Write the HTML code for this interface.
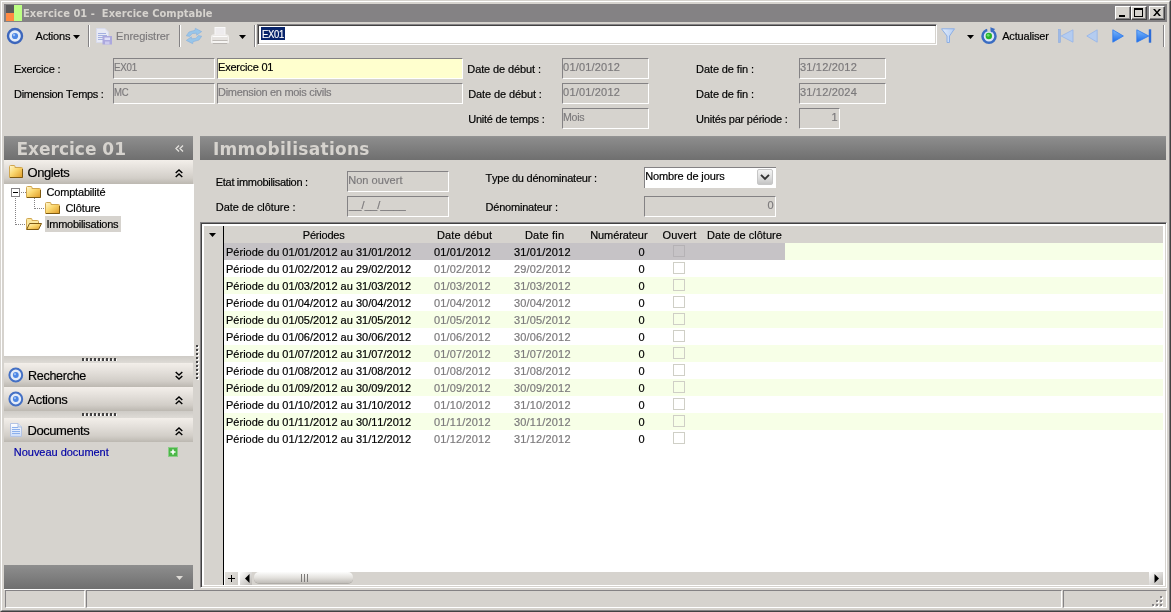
<!DOCTYPE html>
<html lang="fr"><head><meta charset="utf-8"><title>Exercice 01 - Exercice Comptable</title>
<style>
*{box-sizing:border-box;margin:0;padding:0}
html,body{width:1171px;height:612px;overflow:hidden;background:#D6D3CE}
body{font-kerning:none;position:relative;font-family:"Liberation Sans",sans-serif;font-size:11px;color:#000;line-height:13px}
#win{-webkit-text-stroke:.18px;position:absolute;left:0;top:0;width:1171px;height:612px;will-change:transform}
.a{position:absolute}
i{font-style:normal;display:block}
svg{display:block;overflow:visible}
#frame{left:0;top:0;width:1171px;height:612px;border:1px solid;border-color:#D6D3CE #424142 #424142 #D6D3CE}
#frame2{left:1px;top:1px;width:1169px;height:610px;border:1px solid;border-color:#fff #848284 #848284 #fff}
#title{left:4px;top:4px;width:1163px;height:18px;background:#848284}
.wb{position:absolute;top:2px;width:16px;height:14px;background:#D6D3CE;border:1px solid;border-color:#fff #424142 #424142 #fff;box-shadow:inset -1px -1px 0 #848284}
.t{position:absolute;white-space:pre;line-height:13px;height:13px}
.g{color:#7B797B}
.sep{position:absolute;top:25px;width:2px;height:22px;border-left:1px solid #848284;border-right:1px solid #fff}
.f{position:absolute;height:21px;border:1px solid;border-color:#848284 #fff #fff #848284;color:#7B797B;padding:2px 0 0 1px;white-space:pre;overflow:hidden}
.ph{position:absolute;height:24px;top:136px;background:linear-gradient(#959595 0,#8C8C8C 2px,#6F6F6F 100%)}
.bar{position:absolute;left:4px;width:189px;background:linear-gradient(#F3EFEA 0,#E4E0DB 35%,#D2CEC8 75%,#BCB8B1 100%)}
.r{position:absolute;left:224px;width:939px;height:17px;white-space:pre}
.r.alt{background:#F7FFE7}
.r.sel{background:linear-gradient(90deg,#C6C3C6 0,#C6C3C6 561px,#F7FFE7 561px)}
.r span{position:absolute;top:3px;line-height:13px}
.c1{left:2px}
.c2{left:210px;color:#7B797B}
.c3{left:290px;color:#7B797B}
.sel .c2,.sel .c3{color:#000}
.c4{left:414.5px}
.cb{position:absolute;left:449px;top:2px;width:12px;height:12px;border:1px solid #CFCFC6;background:#fff}
.alt .cb{background:#F7FFE7}
.sel .cb{background:#C6C3C6;border-color:#B5B2B5}
.dots{position:absolute;width:36px;height:3px;background:repeating-linear-gradient(90deg,#424142 0,#424142 2px,transparent 2px,transparent 4px)}
.dots:after{content:"";position:absolute;left:1px;top:1px;width:36px;height:2px;background:repeating-linear-gradient(90deg,transparent 0,transparent 1px,#fff 1px,#fff 2px,transparent 2px,transparent 4px)}

.c1{letter-spacing:0.01px}
.c2,.c3{letter-spacing:0.16px}

</style></head><body>
<div id="win">
<div class="a" id="frame"></div><div class="a" id="frame2"></div>
<div class="a" id="title">
 <i class="a" style="left:2px;top:1px;width:8px;height:8px;background:#5A595A"></i>
 <i class="a" style="left:2px;top:9px;width:8px;height:8px;background:#FF8A42"></i>
 <i class="a" style="left:10px;top:1px;width:8px;height:16px;background:#BDFF84"></i>
 <i class="wb" style="left:1111px"><i class="a" style="left:3px;top:8px;width:6px;height:2px;background:#000"></i></i>
 <i class="wb" style="left:1127px"><i class="a" style="left:2px;top:1px;width:9px;height:9px;border:1px solid #000;border-top-width:2px"></i></i>
 <i class="wb" style="left:1145px"><svg class="a" style="left:3px;top:2px" width="8" height="7" viewBox="0 0 8 7"><path d="M0 0H2L4 2.5L6 0H8L5 3.5L8 7H6L4 4.5L2 7H0L3 3.5Z" fill="#000"/></svg></i>
</div>
<span class="t" style="left:23px;top:7px;letter-spacing:0.04px;color:#D6D3CE;font-weight:bold;font-family:'DejaVu Sans Condensed','Liberation Sans',sans-serif;-webkit-text-stroke:0">Exercice 01 -  Exercice Comptable</span>
<!-- toolbar -->
<svg class="a" style="left:6px;top:27px" width="18" height="18" viewBox="0 0 18 18"><circle cx="9" cy="9" r="7" fill="#E4ECF8" stroke="#3C66BC" stroke-width="2.4"/><circle cx="9" cy="9" r="3.1" fill="#4C86E4"/><circle cx="8" cy="8" r="1.2" fill="#9CC0F4"/></svg>
<span class="t" style="left:35.5px;top:30px;letter-spacing:-0.18px">Actions</span>
<svg class="a" style="left:73px;top:35px" width="7" height="4"><path d="M0 0H7L3.5 4Z" fill="#000"/></svg>
<i class="sep" style="left:88px"></i>
<svg class="a" style="left:96px;top:28px" width="16" height="17" viewBox="0 0 16 17"><path d="M.5 .5H9L12.500 4V14.500H.5Z" fill="#E8EAF5" stroke="#D8DBEC"/><path d="M2 5.500H10M2 7.500H11M2 9.500H8M2 11.500H7" stroke="#A4B0E0" stroke-width="1"/><rect x="6.500" y="8" width="9.500" height="8.500" fill="#ACA8DE"/><rect x="8.500" y="9.500" width="5.500" height="2.500" fill="#E0E0F8"/><rect x="9" y="13.500" width="4.500" height="3" fill="#CCCAEE"/></svg>
<span class="t" style="left:116.1px;top:30px;letter-spacing:-0.04px;color:#7B797B">Enregistrer</span>
<i class="sep" style="left:179px"></i>
<svg class="a" style="left:186px;top:28px" width="16" height="16" viewBox="0 0 16 16"><path d="M.3 7.800L3 4L9 2.300L9.300 .3L15.700 3.600L10.600 7.200L10.700 5.200L6.200 5.600L3.600 8.400Z" fill="#98C6EA" stroke="#86AEDC" stroke-width=".6"/><path d="M.3 7.800L3 4L9 2.300L9.300 .3L15.700 3.600L10.600 7.200L10.700 5.200L6.200 5.600L3.600 8.400Z" fill="#98C6EA" stroke="#86AEDC" stroke-width=".6" transform="rotate(180 8 8)"/></svg>
<svg class="a" style="left:211px;top:27px" width="18" height="17" viewBox="0 0 18 17"><rect x="4" y=".5" width="10" height="8" fill="#EEECEE" stroke="#F8F8F8"/><rect x=".5" y="8" width="17" height="8.500" rx="1.500" fill="#E6E3E0" stroke="#F2F0EE"/><path d="M1.500 9.500H16.500" stroke="#FCFCFC"/><path d="M1.500 13.500H16.500" stroke="#BEBAB6"/><rect x="1.500" y="14" width="15" height="2" fill="#F6F5F3"/><path d="M1.500 16.500H16.500" stroke="#B8B4B0"/></svg>
<svg class="a" style="left:239px;top:35px" width="7" height="4"><path d="M0 0H7L3.5 4Z" fill="#000"/></svg>
<i class="sep" style="left:254px"></i>
<div class="a" id="search" style="left:257px;top:24px;width:680px;height:21px;background:#fff;border:1px solid;border-color:#848284 #fff #fff #848284;box-shadow:inset 1px 1px 0 #424142,inset -1px -1px 0 #D6D3CE"><i class="a" style="left:3px;top:2px;width:24px;height:13px;background:#08246B"></i></div>
<span class="t" style="left:261.5px;top:28px;letter-spacing:-0.3px;color:#fff;transform:scaleX(0.86);transform-origin:0 0">EX01</span>
<svg class="a" style="left:941px;top:28px" width="14" height="15" viewBox="0 0 14 15"><defs><linearGradient id="fu" x1="0" y1="0" x2="1" y2="0"><stop offset="0" stop-color="#E4EEFC"/><stop offset="1" stop-color="#B4CCF2"/></linearGradient></defs><path d="M.5 .8H13.500L8.500 8V14.500H6V8Z" fill="url(#fu)" stroke="#8CAEE4" stroke-width="1" stroke-linejoin="round"/></svg>
<svg class="a" style="left:967px;top:35px" width="7" height="4"><path d="M0 0H7L3.5 4Z" fill="#000"/></svg>
<svg class="a" style="left:980px;top:27px" width="18" height="18" viewBox="0 0 18 18"><circle cx="9" cy="9.300" r="6.500" fill="#DCE6F6" stroke="#3A6CC2" stroke-width="2.500"/><path d="M6.800 0L11 0L10.500 4.500L7.500 4.500Z" fill="#D6D3CE"/><path d="M10.300 .3L15.200 2L11.200 5.400Z" fill="#3A6CC2"/><circle cx="8.800" cy="9" r="3.200" fill="#28B428"/><circle cx="8.200" cy="8.300" r="1.400" fill="#6CDC6C"/></svg>
<span class="t" style="left:1002.2px;top:30px;letter-spacing:-0.17px">Actualiser</span>
<svg class="a" style="left:1058px;top:29px" width="16" height="14" viewBox="0 0 16 14"><rect x=".5" y=".5" width="2" height="13" fill="#9DB9E8" stroke="#8CACE0" stroke-width=".6"/><path d="M15 .8V13.200L3.200 7Z" fill="#B4CCF0" stroke="#94B4E8" stroke-width=".8"/></svg>
<svg class="a" style="left:1086px;top:29px" width="12" height="14" viewBox="0 0 12 14"><path d="M11.200 .8V13.200L.8 7Z" fill="#B4CCF0" stroke="#94B4E8" stroke-width=".8"/></svg>
<svg class="a" style="left:1112px;top:29px" width="13" height="14" viewBox="0 0 13 14"><defs><linearGradient id="pb" x1="0" y1="0" x2="0" y2="1"><stop offset="0" stop-color="#7CB8FC"/><stop offset="1" stop-color="#1C6CE8"/></linearGradient></defs><path d="M.8 .8V13.200L11.400 7Z" fill="url(#pb)" stroke="#2C78EC" stroke-width=".8"/></svg>
<svg class="a" style="left:1136px;top:29px" width="16" height="14" viewBox="0 0 16 14"><path d="M.8 .8V13.200L12.800 7Z" fill="url(#pb)" stroke="#2C78EC" stroke-width=".8"/><rect x="12.800" y=".3" width="2.400" height="13.400" fill="#2C6CD8"/></svg>
<i class="sep" style="left:1163px"></i>
<!-- form -->
<span class="t" style="left:14px;top:63px;letter-spacing:-0.2px">Exercice :</span>
<span class="t" style="left:14px;top:88px;letter-spacing:-0.31px">Dimension Temps :</span>
<div class="f" style="left:113px;top:58px;width:102px"></div>
<div class="f" style="left:217px;top:58px;width:246px;background:#FFFFCE"></div>
<div class="f" style="left:113px;top:83px;width:102px"></div>
<div class="f" style="left:217px;top:83px;width:246px"></div>
<span class="t" style="left:114.3px;top:61px;letter-spacing:-0.3px;color:#7B797B;transform:scaleX(0.888);transform-origin:0 0">EX01</span>
<span class="t" style="left:218px;top:61px;letter-spacing:-0.2px">Exercice 01</span>
<span class="t" style="left:114.3px;top:86px;letter-spacing:-0.3px;color:#7B797B;transform:scaleX(0.867);transform-origin:0 0">MC</span>
<span class="t" style="left:218px;top:86px;letter-spacing:-0.3px;color:#7B797B">Dimension en mois civils</span>
<span class="t" style="left:467.3px;top:63px;letter-spacing:-0.11px">Date de début :</span>
<span class="t" style="left:468.2px;top:88px;letter-spacing:-0.11px">Date de début :</span>
<span class="t" style="left:468.2px;top:113px;letter-spacing:-0.24px">Unité de temps :</span>
<div class="f" style="left:562px;top:58px;width:87px"></div>
<div class="f" style="left:562px;top:83px;width:87px"></div>
<div class="f" style="left:562px;top:108px;width:87px"></div>
<span class="t" style="left:563.1px;top:61px;letter-spacing:0.19px;color:#7B797B">01/01/2012</span>
<span class="t" style="left:563.1px;top:86px;letter-spacing:0.19px;color:#7B797B">01/01/2012</span>
<span class="t" style="left:563.1px;top:111px;letter-spacing:-0.3px;color:#7B797B;transform:scaleX(0.966);transform-origin:0 0">Mois</span>
<span class="t" style="left:696.1px;top:63px;letter-spacing:-0.11px">Date de fin :</span>
<span class="t" style="left:696.1px;top:88px;letter-spacing:-0.11px">Date de fin :</span>
<span class="t" style="left:696.1px;top:113px;letter-spacing:-0.22px">Unités par période :</span>
<div class="f" style="left:799px;top:58px;width:87px"></div>
<div class="f" style="left:799px;top:83px;width:87px"></div>
<div class="f" style="left:799px;top:108px;width:41px"></div>
<span class="t" style="left:800px;top:61px;letter-spacing:0.19px;color:#7B797B">31/12/2012</span>
<span class="t" style="left:800px;top:86px;letter-spacing:0.19px;color:#7B797B">31/12/2024</span>
<span class="t" style="left:831.5px;top:111px;color:#7B797B">1</span>
<!-- panel headers -->
<div class="ph" style="left:4px;width:189px"></div>
<div class="ph" style="left:200px;width:966px"></div>
<span class="t" style="left:16.5px;top:140px;letter-spacing:-0.01px;font-size:17px;line-height:19px;height:19px;color:#D6D3CE;font-weight:bold;font-family:'DejaVu Sans','Liberation Sans',sans-serif;-webkit-text-stroke:0">Exercice 01</span>
<span class="t" style="left:213px;top:140px;letter-spacing:0.28px;font-size:17px;line-height:19px;height:19px;color:#D6D3CE;font-weight:bold;font-family:'DejaVu Sans','Liberation Sans',sans-serif;-webkit-text-stroke:0">Immobilisations</span>
<svg class="a" style="left:175px;top:145px" width="9" height="7" viewBox="0 0 9 7"><path d="M4 .5L1 3.500L4 6.500M8 .5L5 3.500L8 6.500" fill="none" stroke="#E4E2DE" stroke-width="1.300"/></svg>
<!-- left panel -->
<div class="bar" style="top:160px;height:24px"></div>
<svg class="a" style="left:9px;top:165px" width="14" height="13" viewBox="0 0 14 13"><defs><linearGradient id="fg" x1="0" y1="0" x2="1" y2="1"><stop offset="0" stop-color="#FFF8D2"/><stop offset=".45" stop-color="#FBD870"/><stop offset="1" stop-color="#DE9A26"/></linearGradient></defs><path d="M.5 12.500V1.500Q.5 .5 1.500 .5H5Q6 .5 6 1.500V2.500H12.500Q13.500 2.500 13.500 3.500V12.500Z" fill="url(#fg)" stroke="#D0A650"/><path d="M13.500 4V12.500H1" fill="none" stroke="#7E5A12"/></svg>
<span class="t" style="left:27.5px;top:165px;letter-spacing:-0.43px;font-size:13px;line-height:15px;height:15px">Onglets</span>
<svg class="a chev" style="left:175px;top:169px" width="8" height="9" viewBox="0 0 8 9"><path d="M.7 4L4 .9L7.300 4M.7 8L4 4.900L7.300 8" fill="none" stroke="#000" stroke-width="1.400"/></svg>
<div class="a" style="left:4px;top:184px;width:190px;height:172px;background:#fff"></div>
<!-- tree -->
<svg class="a" style="left:11px;top:186px" width="36" height="40" viewBox="0 0 36 40" shape-rendering="crispEdges"><path d="M9.500 6.500H15M4.500 12V38.500M4.500 38.500H15M23.500 12V22.500M23.500 22.500H34" fill="none" stroke="#848284" stroke-dasharray="1 1"/><rect x=".5" y="2.500" width="8" height="8" fill="#fff" stroke="#848284"/><path d="M2 6.500H7" stroke="#000"/></svg>
<svg class="a" style="left:26px;top:186px" width="15" height="12" viewBox="0 0 15 12"><path d="M.5 11.500V1.500Q.5 .5 1.500 .5H5Q6 .5 6 1.500V2.500H13.500Q14.500 2.500 14.500 3.500V11.500Z" fill="url(#fg)" stroke="#D0A650"/><path d="M14.500 4V11.500H1" fill="none" stroke="#7E5A12"/></svg>
<svg class="a" style="left:45px;top:202px" width="15" height="12" viewBox="0 0 15 12"><path d="M.5 11.500V1.500Q.5 .5 1.500 .5H5Q6 .5 6 1.500V2.500H13.500Q14.500 2.500 14.500 3.500V11.500Z" fill="url(#fg)" stroke="#D0A650"/><path d="M14.500 4V11.500H1" fill="none" stroke="#7E5A12"/></svg>
<svg class="a" style="left:26px;top:218px" width="16" height="12" viewBox="0 0 16 12"><path d="M.5 11.500V1.500Q.5 .5 1.500 .5H5Q6 .5 6 1.500V2.500H11.500Q12.500 2.500 12.500 3.500V5" fill="#FBE8A0" stroke="#D0A650"/><path d="M.7 11.500L3.500 5.500H15.500L12.500 11.500Z" fill="url(#fg)" stroke="#7E5A12"/></svg>
<span class="t" style="left:46.5px;top:186px;letter-spacing:-0.19px">Comptabilité</span>
<span class="t" style="left:65.5px;top:202px;letter-spacing:-0.08px">Clôture</span>
<i class="a" style="left:45px;top:216px;width:76px;height:16px;background:#D6D3CE"></i>
<span class="t" style="left:46.5px;top:218px;letter-spacing:-0.27px">Immobilisations</span>
<i class="a" style="left:4px;top:356px;width:189px;height:7px;background:linear-gradient(#CECBC6,#DEDBD6)"></i>
<i class="dots" style="left:82px;top:358px"></i>
<div class="bar" style="top:363px;height:24px"></div>
<svg class="a" style="left:8px;top:367px" width="16" height="16" viewBox="0 0 16 16"><circle cx="7.800" cy="8" r="6.400" fill="#E4ECF8" stroke="#4470C4" stroke-width="2"/><circle cx="7.800" cy="8" r="2.900" fill="#4C86E4"/><circle cx="7" cy="7.200" r="1.100" fill="#9CC0F4"/></svg>
<span class="t" style="left:27.5px;top:368px;letter-spacing:-0.3px;font-size:13px;line-height:15px;height:15px;transform:scaleX(0.964);transform-origin:0 0">Recherche</span>
<svg class="a" style="left:175px;top:371px" width="8" height="9" viewBox="0 0 8 9"><path d="M.7 1L4 4.100L7.300 1M.7 5L4 8.100L7.300 5" fill="none" stroke="#000" stroke-width="1.400"/></svg>
<div class="bar" style="top:387px;height:24px"></div>
<svg class="a" style="left:8px;top:391px" width="16" height="16" viewBox="0 0 16 16"><circle cx="7.800" cy="8" r="6.400" fill="#E4ECF8" stroke="#4470C4" stroke-width="2"/><circle cx="7.800" cy="8" r="2.900" fill="#4C86E4"/><circle cx="7" cy="7.200" r="1.100" fill="#9CC0F4"/></svg>
<span class="t" style="left:27.5px;top:392px;letter-spacing:-0.39px;font-size:13px;line-height:15px;height:15px">Actions</span>
<svg class="a" style="left:175px;top:396px" width="8" height="9" viewBox="0 0 8 9"><path d="M.7 4L4 .9L7.300 4M.7 8L4 4.900L7.300 8" fill="none" stroke="#000" stroke-width="1.400"/></svg>
<i class="a" style="left:4px;top:411px;width:189px;height:7px;background:linear-gradient(#CECBC6,#DEDBD6)"></i>
<i class="dots" style="left:82px;top:413px"></i>
<div class="bar" style="top:418px;height:24px"></div>
<svg class="a" style="left:10px;top:423px" width="12" height="14" viewBox="0 0 12 14"><defs><linearGradient id="dg" x1="0" y1="0" x2="0" y2="1"><stop offset="0" stop-color="#FFFFFF"/><stop offset="1" stop-color="#CCDCF8"/></linearGradient></defs><path d="M.5 .5H8L11.500 4V13.500H.5Z" fill="url(#dg)" stroke="#B4C4E4"/><path d="M2 4.500H8M2 6.500H10M2 8.500H10M2 10.500H10" stroke="#8CB0EC"/><path d="M8 .5V4H11.500" fill="#DCE8FA" stroke="#A8BCE0"/></svg>
<span class="t" style="left:27.5px;top:423px;letter-spacing:-0.44px;font-size:13px;line-height:15px;height:15px">Documents</span>
<svg class="a" style="left:175px;top:427px" width="8" height="9" viewBox="0 0 8 9"><path d="M.7 4L4 .9L7.300 4M.7 8L4 4.900L7.300 8" fill="none" stroke="#000" stroke-width="1.400"/></svg>
<span class="t" style="left:13.8px;top:446px;letter-spacing:-0.03px;color:#0000A5">Nouveau document</span>
<svg class="a" style="left:168px;top:447px" width="10" height="10" viewBox="0 0 10 10"><rect x=".5" y=".5" width="9" height="9" fill="#4CB848" stroke="#8CCC88"/><path d="M5 2.500V7.500M2.500 5H7.500" stroke="#fff" stroke-width="1.600"/></svg>
<div class="a" style="left:4px;top:565px;width:189px;height:24px;background:linear-gradient(#8E8E8E,#6F6F6F)"></div>
<svg class="a" style="left:176px;top:576px" width="7" height="4"><path d="M0 0H7L3.5 4Z" fill="#DEDBD6"/></svg>
<i class="a" style="left:4px;top:589px;width:190px;height:1px;background:#fff"></i>
<!-- vertical handle -->
<i class="a" style="left:196px;top:345px;width:3px;height:35px;background:linear-gradient(#424142 2px,transparent 2px) 0 0/2px 4px repeat-y,linear-gradient(#fff 2px,transparent 2px) 1px 1px/2px 4px repeat-y"></i>
<!-- right panel form -->
<span class="t" style="left:215.8px;top:176px;letter-spacing:-0.31px">Etat immobilisation :</span>
<span class="t" style="left:215.8px;top:201px;letter-spacing:-0.06px">Date de clôture :</span>
<div class="f" style="left:347px;top:171px;width:102px"></div>
<div class="f" style="left:347px;top:196px;width:102px"></div>
<span class="t" style="left:348.2px;top:174px;letter-spacing:0.05px;color:#7B797B">Non ouvert</span>
<span class="t" style="left:348.9px;top:199px;letter-spacing:0.19px;color:#7B797B">__/__/____</span>
<span class="t" style="left:485.5px;top:172px;letter-spacing:-0.22px">Type du dénominateur :</span>
<span class="t" style="left:485.5px;top:201px;letter-spacing:-0.21px">Dénominateur :</span>
<div class="a" style="left:644px;top:167px;width:132px;height:21px;background:#fff;border-top:1px solid #848284;border-left:1px solid #848284"></div>
<span class="t" style="left:645.3px;top:170px;letter-spacing:-0.14px">Nombre de jours</span>
<div class="a" style="left:757px;top:169px;width:16px;height:16px;border:1px solid #C6C6C6;border-radius:2px;background:linear-gradient(#F4F4F4,#E0E0E0 50%,#C4C4C4)"><svg class="a" style="left:2px;top:4px" width="10" height="6" viewBox="0 0 10 6"><path d="M1 .8L5 4.800L9 .8" fill="none" stroke="#333" stroke-width="1.900"/></svg></div>
<div class="f" style="left:644px;top:196px;width:132px"></div>
<span class="t" style="left:767.5px;top:199px;color:#7B797B">0</span>
<!-- grid -->
<div class="a" id="grid" style="left:200px;top:222px;width:967px;height:366px;background:#fff;border:1px solid;border-color:#848284 #fff #fff #848284;box-shadow:inset 1px 1px 0 #424142,inset -1px -1px 0 #D6D3CE"></div>
<i class="a" style="left:204px;top:226px;width:19px;height:359px;background:#D6D3CE"></i>
<i class="a" style="left:223px;top:226px;width:1px;height:359px;background:#000"></i>
<i class="a" style="left:224px;top:226px;width:939px;height:17px;background:#D6D3CE"></i>
<i class="a" style="left:240px;top:572px;width:923px;height:13px;background:#D6D3CE"></i>
<span class="t" style="left:302.8px;top:229px;letter-spacing:-0.22px">Périodes</span>
<span class="t" style="left:437px;top:229px;letter-spacing:0.13px">Date début</span>
<span class="t" style="left:525px;top:229px;letter-spacing:0.16px">Date fin</span>
<span class="t" style="left:590.2px;top:229px;letter-spacing:-0.08px">Numérateur</span>
<span class="t" style="left:662.6px;top:229px;letter-spacing:0.12px">Ouvert</span>
<span class="t" style="left:707.1px;top:229px;letter-spacing:0.01px">Date de clôture</span>
<svg class="a" style="left:209px;top:233px" width="7" height="4"><path d="M0 0H7L3.5 4Z" fill="#000"/></svg>
<!-- scrollbar -->
<i class="a" style="left:225px;top:572px;width:13px;height:13px;background:linear-gradient(135deg,#E4E2DE,#CCC9C4)"></i>
<svg class="a" style="left:228px;top:575px" width="7" height="7"><path d="M3.500 0V7M0 3.500H7" stroke="#000" stroke-width="1"/></svg>
<i class="a" style="left:240px;top:572px;width:12px;height:13px;background:linear-gradient(135deg,#FFFFFF,#B8B5B0)"></i>
<svg class="a" style="left:245px;top:574px" width="5" height="9"><path d="M4.500 0V9L0 4.500Z" fill="#000"/></svg>
<i class="a" style="left:254px;top:572px;width:99px;height:11px;border-radius:5px;background:linear-gradient(#FDFDFC,#E4E2DE 50%,#C0BDB8);box-shadow:0 1px 0 #B0ADA8"></i>
<i class="a" style="left:301px;top:574px;width:7px;height:8px;background:linear-gradient(90deg,#7C7A78 1px,transparent 1px) 0 0/3px 8px repeat-x"></i>
<i class="a" style="left:1149px;top:572px;width:14px;height:13px;background:linear-gradient(135deg,#FFFFFF,#B8B5B0)"></i>
<svg class="a" style="left:1154px;top:574px" width="5" height="9"><path d="M.5 0V9L5 4.500Z" fill="#000"/></svg>
<!-- status -->
<div class="a" style="left:5px;top:590px;width:80px;height:18px;border:1px solid;border-color:#848284 #fff #fff #848284"></div>
<div class="a" style="left:86px;top:590px;width:976px;height:18px;border:1px solid;border-color:#848284 #fff #fff #848284"></div>
<div class="a" style="left:1063px;top:590px;width:104px;height:18px;border:1px solid;border-color:#848284 #fff #fff #848284"></div>
<svg class="a" style="left:1151px;top:595px" width="12" height="12" viewBox="0 0 12 12" shape-rendering="crispEdges"><g fill="#fff"><rect x="10" y="2" width="2" height="2"/><rect x="6" y="6" width="2" height="2"/><rect x="10" y="6" width="2" height="2"/><rect x="2" y="10" width="2" height="2"/><rect x="6" y="10" width="2" height="2"/><rect x="10" y="10" width="2" height="2"/></g><g fill="#848284"><rect x="9" y="1" width="2" height="2"/><rect x="5" y="5" width="2" height="2"/><rect x="9" y="5" width="2" height="2"/><rect x="1" y="9" width="2" height="2"/><rect x="5" y="9" width="2" height="2"/><rect x="9" y="9" width="2" height="2"/></g></svg>

<div id="gridrows">
<div class="r alt sel" style="top:243px"><span class="c1">Période du 01/01/2012 au 31/01/2012</span><span class="c2">01/01/2012</span><span class="c3">31/01/2012</span><span class="c4">0</span><i class="cb"></i></div>
<div class="r" style="top:260px"><span class="c1">Période du 01/02/2012 au 29/02/2012</span><span class="c2">01/02/2012</span><span class="c3">29/02/2012</span><span class="c4">0</span><i class="cb"></i></div>
<div class="r alt" style="top:277px"><span class="c1">Période du 01/03/2012 au 31/03/2012</span><span class="c2">01/03/2012</span><span class="c3">31/03/2012</span><span class="c4">0</span><i class="cb"></i></div>
<div class="r" style="top:294px"><span class="c1">Période du 01/04/2012 au 30/04/2012</span><span class="c2">01/04/2012</span><span class="c3">30/04/2012</span><span class="c4">0</span><i class="cb"></i></div>
<div class="r alt" style="top:311px"><span class="c1">Période du 01/05/2012 au 31/05/2012</span><span class="c2">01/05/2012</span><span class="c3">31/05/2012</span><span class="c4">0</span><i class="cb"></i></div>
<div class="r" style="top:328px"><span class="c1">Période du 01/06/2012 au 30/06/2012</span><span class="c2">01/06/2012</span><span class="c3">30/06/2012</span><span class="c4">0</span><i class="cb"></i></div>
<div class="r alt" style="top:345px"><span class="c1">Période du 01/07/2012 au 31/07/2012</span><span class="c2">01/07/2012</span><span class="c3">31/07/2012</span><span class="c4">0</span><i class="cb"></i></div>
<div class="r" style="top:362px"><span class="c1">Période du 01/08/2012 au 31/08/2012</span><span class="c2">01/08/2012</span><span class="c3">31/08/2012</span><span class="c4">0</span><i class="cb"></i></div>
<div class="r alt" style="top:379px"><span class="c1">Période du 01/09/2012 au 30/09/2012</span><span class="c2">01/09/2012</span><span class="c3">30/09/2012</span><span class="c4">0</span><i class="cb"></i></div>
<div class="r" style="top:396px"><span class="c1">Période du 01/10/2012 au 31/10/2012</span><span class="c2">01/10/2012</span><span class="c3">31/10/2012</span><span class="c4">0</span><i class="cb"></i></div>
<div class="r alt" style="top:413px"><span class="c1">Période du 01/11/2012 au 30/11/2012</span><span class="c2">01/11/2012</span><span class="c3">30/11/2012</span><span class="c4">0</span><i class="cb"></i></div>
<div class="r" style="top:430px"><span class="c1">Période du 01/12/2012 au 31/12/2012</span><span class="c2">01/12/2012</span><span class="c3">31/12/2012</span><span class="c4">0</span><i class="cb"></i></div>
</div>
</div>
</body></html>
